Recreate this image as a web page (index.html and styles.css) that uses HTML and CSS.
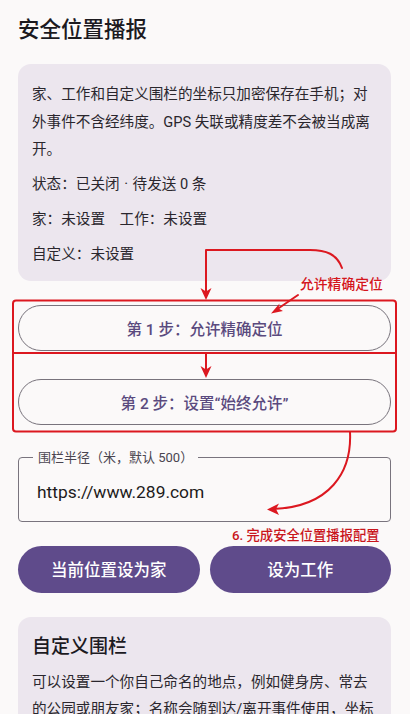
FILE: index.html
```html
<!DOCTYPE html>
<html lang="zh-CN">
<head>
<meta charset="utf-8">
<title>安全位置播报</title>
<link rel="stylesheet" href="styles.css">
</head>
<body>
<main class="page">
  <h1 class="title">安全位置播报</h1>
  <section class="card info">
    <p class="line">家、工作和自定义围栏的坐标只加密保存在手机；对外事件不含经纬度。GPS 失联或精度差不会被当成离开。</p>
    <p class="line">状态：已关闭 <span class="dot">·</span> 待发送 0 条</p>
    <p class="line">家：未设置　工作：未设置</p>
    <p class="line">自定义：未设置</p>
  </section>
  <button class="step step1">第 1 步：允许精确定位</button>
  <button class="step step2">第 2 步：设置“始终允许”</button>
  <fieldset class="field">
    <legend class="field-label">围栏半径（米，默认 500）</legend>
    <div class="field-value">https://www.289.com</div>
  </fieldset>
  <div class="actions">
    <button class="filled">当前位置设为家</button>
    <button class="filled">设为工作</button>
  </div>
  <section class="card custom">
    <h2 class="card-title">自定义围栏</h2>
    <p class="line">可以设置一个你自己命名的地点，例如健身房、常去的公园或朋友家；名称会随到达/离开事件使用，坐标只保存在手机。</p>
  </section>
</main>

<svg class="overlay" width="410" height="714" viewBox="0 0 410 714" xmlns="http://www.w3.org/2000/svg">
  <g fill="none" stroke="#dc1820" stroke-width="2" stroke-linecap="round" stroke-linejoin="round">
    <rect x="13" y="300.5" width="383" height="131" rx="3"/>
    <line x1="13" y1="353" x2="396" y2="353"/>
    <path d="M342 268 C337 254 326 250 310 250 L206 250 L206 292"/>
    <path d="M298 295 L276 310"/>
    <path d="M206 354 L206 372"/>
    <path d="M350 432 C352 472 330 507 273 509"/>
  </g>
  <g fill="#dc1820">
    <path d="M200.5 288 L206 300 L211.5 288 L206 291.5 Z"/>
    <path d="M271 313.5 L279.5 303.5 L278.5 308.5 L283 311 Z"/>
    <path d="M200.5 366 L206 378 L211.5 366 L206 369.5 Z"/>
    <path d="M267 509.5 L279 503.5 L276 509 L279 515 Z"/>
  </g>
</svg>
<div class="note note1">允许精确定位</div>
<div class="note note2">6. 完成安全位置播报配置</div>
</body>
</html>
```

FILE: styles.css
```css
html, body {
  margin: 0;
  padding: 0;
}
body {
  position: relative;
  width: 410px;
  height: 714px;
  overflow: hidden;
  background: #fbf9f9;
  font-family: Roboto, "Noto Sans CJK SC", sans-serif;
  color: #1f1b22;
}
.page {
  display: flex;
  flex-direction: column;
  padding: 0 19px 0 18px;
}
.title {
  margin: 15px 0 0;
  font-size: 21.5px;
  line-height: 30px;
  font-weight: 500;
  color: #1c1a1f;
}
.card {
  background: #ece6ee;
  border-radius: 13px;
  padding: 17px 13px 12px 14px;
}
.info {
  margin-top: 19px;
}
.line {
  margin: 0;
  font-size: 14.6px;
  line-height: 27.5px;
  color: #2a262d;
}
.info .line + .line {
  margin-top: 7.6px;
}
.dot {
  margin: 0 1px;
}
.step {
  display: block;
  width: 100%;
  height: 46px;
  border: 1.2px solid #78737c;
  border-radius: 23px;
  background: transparent;
  font-family: inherit;
  font-size: 15.5px;
  font-weight: 500;
  color: #5a4a7e;
  padding: 0;
}
.step1 {
  margin-top: 24px;
}
.step2 {
  margin-top: 28px;
}
.field {
  margin: 24px 0 0;
  padding: 13px 14px 17px 18px;
  border: 1.2px solid #79747e;
  border-radius: 4px;
  min-width: 0;
}
.field-label {
  margin-left: -4px;
  padding: 0 5px;
  font-size: 13px;
  line-height: 18px;
  color: #4a4550;
}
.field-value {
  font-family: Roboto, "Noto Sans CJK SC", sans-serif;
  font-size: 17.4px;
  line-height: 24px;
  color: #1d1b20;
}
.actions {
  display: flex;
  gap: 10px;
  margin-top: 24px;
}
.filled {
  flex: 1;
  height: 47px;
  border: none;
  border-radius: 24px;
  background: #5f4b8b;
  color: #ffffff;
  font-family: inherit;
  font-size: 16.5px;
  font-weight: 500;
  padding: 0;
}
.custom {
  margin-top: 24px;
  padding-top: 16px;
}
.card-title {
  margin: 0;
  font-size: 19px;
  line-height: 28px;
  font-weight: 500;
  color: #1c1a1f;
}
.custom .line {
  margin-top: 8px;
}
.overlay {
  position: absolute;
  left: 0;
  top: 0;
  pointer-events: none;
}
.note {
  position: absolute;
  color: #d4161d;
  font-weight: 500;
  white-space: nowrap;
}
.note1 {
  left: 300px;
  top: 274px;
  font-size: 13.8px;
  line-height: 20px;
}
.note2 {
  left: 232px;
  top: 526px;
  font-size: 13.3px;
  line-height: 20px;
  color: #c9151c;
}
```
